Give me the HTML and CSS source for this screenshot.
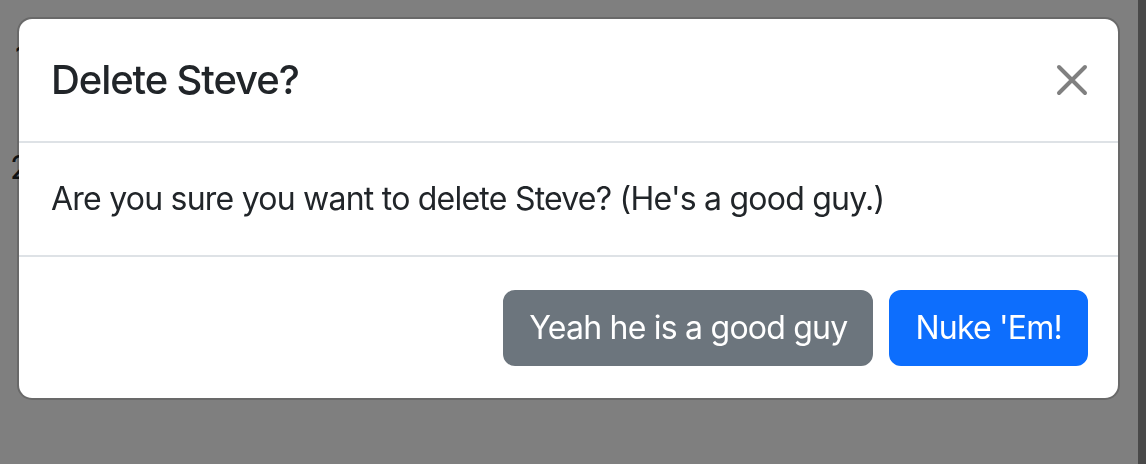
FILE: index.html
```html
<!DOCTYPE html>
<html lang="en">
<head>
<meta charset="utf-8">
<title>Delete Steve?</title>
<link rel="stylesheet" href="styles.css">
</head>
<body>
<div class="page">
  <div class="row row-first">1</div>
  <div class="row">2</div>
</div>
<div class="backdrop"></div>
<div class="scroll-strip"></div>
<div class="modal" role="dialog" aria-labelledby="modal-title">
  <div class="modal-header">
    <h5 class="modal-title" id="modal-title">Delete Steve?</h5>
    <button class="btn-close" type="button" aria-label="Close">
      <svg width="32" height="32" viewBox="0 0 32 32" aria-hidden="true">
        <path d="M3 3 L29 29 M29 3 L3 29" stroke="#808080" stroke-width="4" stroke-linecap="round" fill="none"/>
      </svg>
    </button>
  </div>
  <div class="modal-body">Are you sure you want to delete Steve? (He's a good guy.)</div>
  <div class="modal-footer">
    <button class="btn btn-secondary" type="button">Yeah he is a good guy</button>
    <button class="btn btn-primary" type="button">Nuke 'Em!</button>
  </div>
</div>
</body>
</html>
```
FILE: styles.css
```css
* { box-sizing: border-box; }
html, body { margin: 0; padding: 0; }
body {
  background: #fff;
  color: #212529;
  font-family: Inter, "Noto Sans", "Liberation Sans", sans-serif;
  width: 1146px;
  height: 464px;
  overflow: hidden;
}
.page {
  padding: 34px 0 0 10px;
}
.row {
  height: 110px;
  font-size: 32px;
  line-height: 48px;
}
.row-first {
  padding-left: 5px;
}
.backdrop {
  position: fixed;
  inset: 0;
  background: rgba(0, 0, 0, 0.5);
}
.scroll-strip {
  position: fixed;
  top: 0;
  right: 0;
  width: 8px;
  height: 100%;
  background: #494949;
}
.modal {
  position: fixed;
  left: 17px;
  top: 17px;
  width: 1103px;
  background: #fff;
  background-clip: padding-box;
  border: 2px solid rgba(0, 0, 0, 0.175);
  border-radius: 15px;
  display: flex;
  flex-direction: column;
}
.modal-header {
  display: flex;
  align-items: center;
  justify-content: space-between;
  padding: 32px;
  min-height: 124px;
  border-bottom: 2px solid #dee2e6;
}
.modal-title {
  margin: 0;
  font-size: 40px;
  font-weight: 550;
  line-height: 1.2;
  letter-spacing: -1.1px;
  color: #212529;
}
.btn-close {
  display: flex;
  padding: 0;
  margin: 0 -2px 0 0;
  border: 0;
  background: transparent;
  width: 32px;
  height: 32px;
}
.modal-body {
  padding: 32px;
  font-size: 32px;
  line-height: 1.5;
  letter-spacing: -0.77px;
  color: #212529;
}
.modal-footer {
  display: flex;
  justify-content: flex-end;
  align-items: center;
  padding: 25px 22px 24px 24px;
  border-top: 2px solid #dee2e6;
}
.btn {
  margin: 8px;
  font-family: inherit;
  font-size: 32px;
  line-height: 1.5;
  font-weight: 400;
  letter-spacing: -0.78px;
  padding: 12px 24px;
  border: 2px solid transparent;
  border-radius: 12px;
  color: #fff;
}
.btn-secondary {
  background: #6c757d;
  border-color: #6c757d;
}
.btn-primary {
  background: #0d6efd;
  border-color: #0d6efd;
}
```
